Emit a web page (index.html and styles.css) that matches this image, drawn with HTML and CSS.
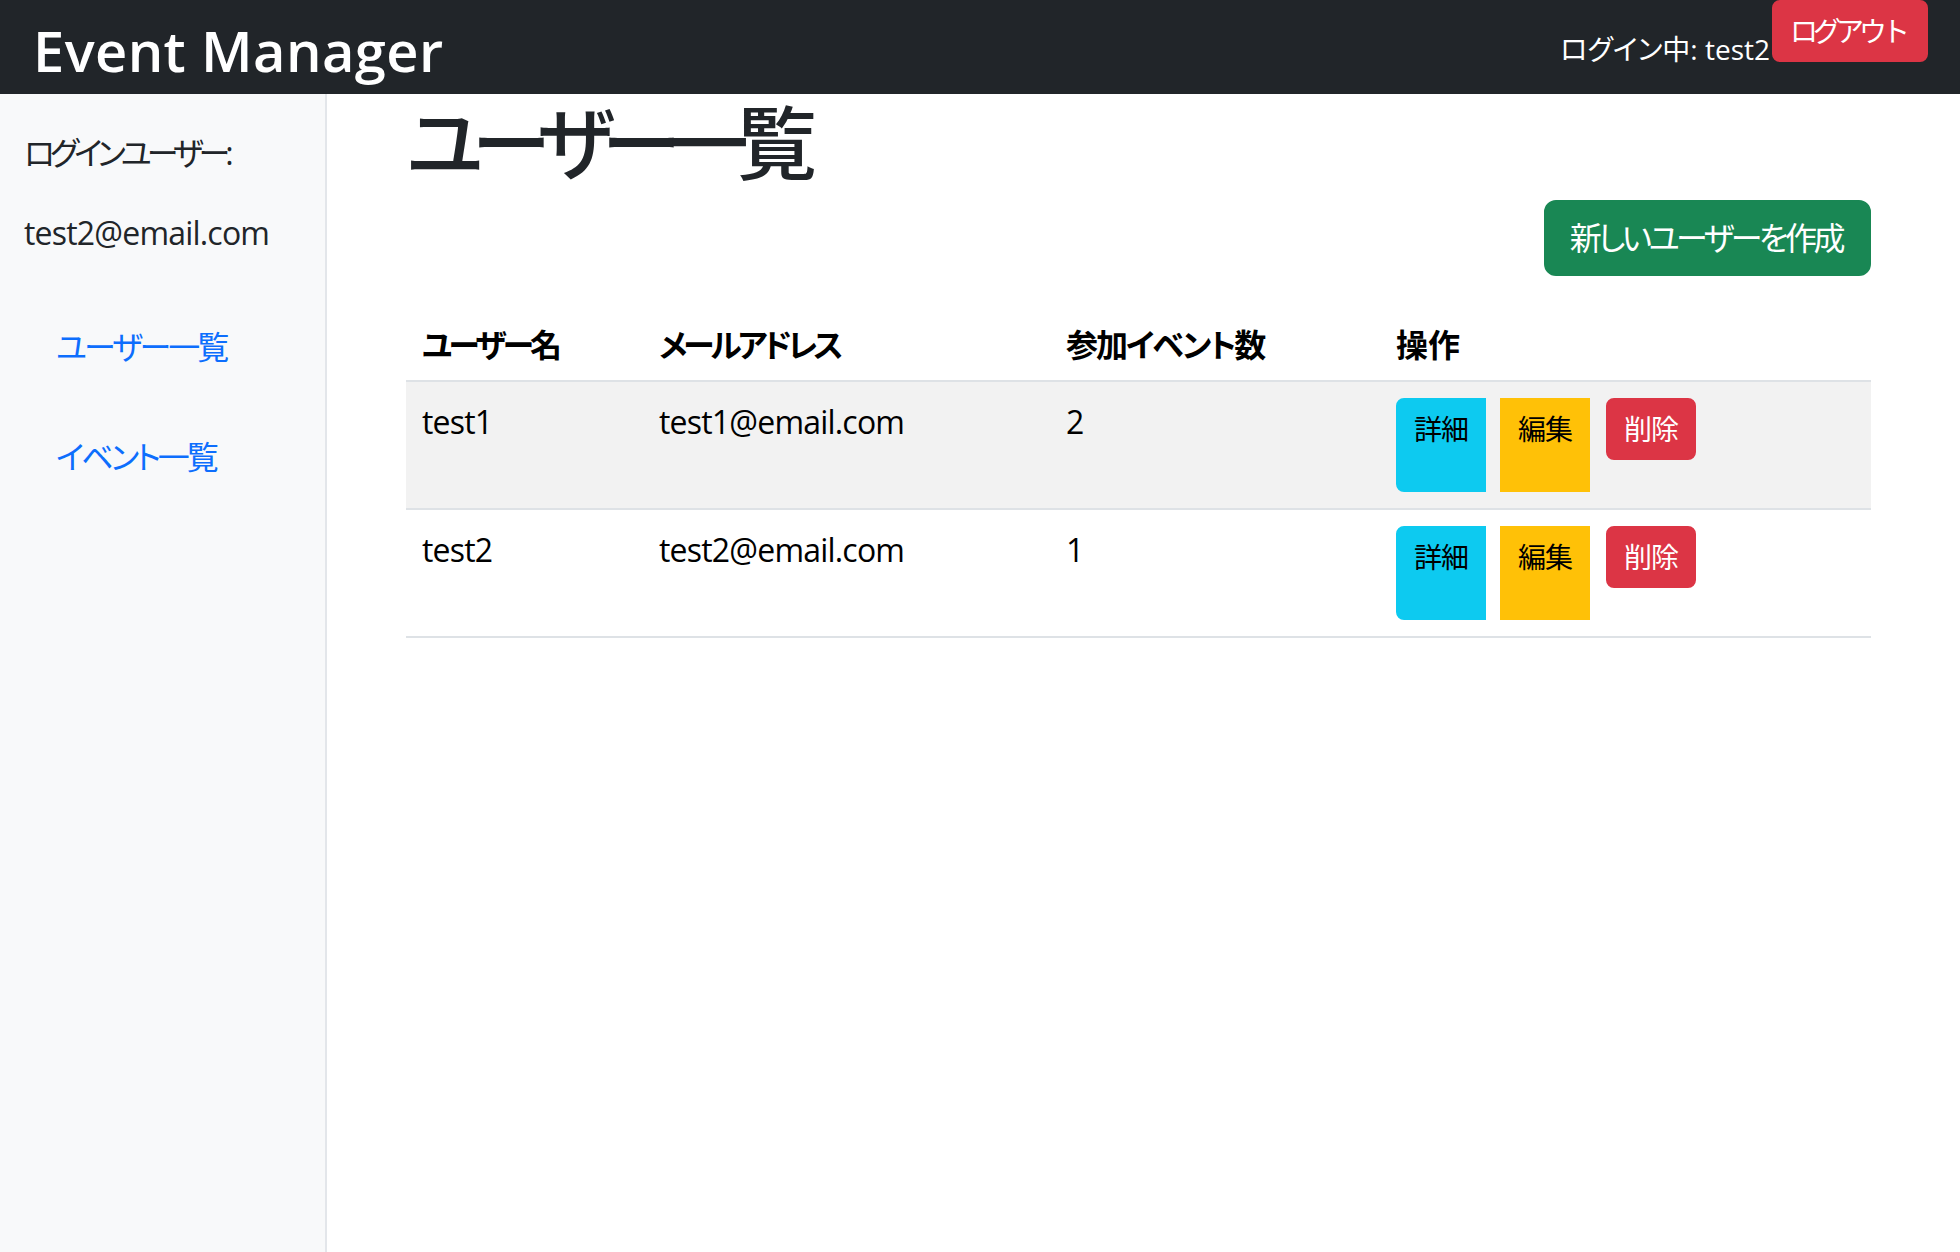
FILE: index.html
```html
<!DOCTYPE html>
<html lang="ja">
<head>
<meta charset="utf-8">
<title>Event Manager</title>
<link rel="stylesheet" href="styles.css">
</head>
<body>
<header class="navbar">
  <span class="brand">Event Manager</span>
  <div class="nav-right">
    <span class="login-info">ログイン中: test2</span>
    <button class="btn btn-sm btn-danger logout">ログアウト</button>
  </div>
</header>
<div class="layout">
  <aside class="sidebar">
    <p class="side-text side-label">ログインユーザー:</p>
    <p class="side-text side-email">test2@email.com</p>
    <ul class="side-nav">
      <li><a class="nav-link" href="#">ユーザー一覧</a></li>
      <li><a class="nav-link" href="#">イベント一覧</a></li>
    </ul>
  </aside>
  <main class="main">
    <h1 class="page-title">ユーザー一覧</h1>
    <div class="toolbar">
      <a class="btn btn-success new-user" href="#">新しいユーザーを作成</a>
    </div>
    <table class="table">
      <thead>
        <tr>
          <th class="col-name">ユーザー名</th>
          <th class="col-mail">メールアドレス</th>
          <th class="col-count">参加イベント数</th>
          <th class="col-ops">操作</th>
        </tr>
      </thead>
      <tbody>
        <tr class="striped">
          <td>test1</td>
          <td>test1@email.com</td>
          <td>2</td>
          <td>
            <div class="btn-group">
              <a class="btn btn-sm btn-info first" href="#">詳細</a>
              <a class="btn btn-sm btn-warning middle" href="#">編集</a>
              <form class="inline-form"><button class="btn btn-sm btn-danger" type="button">削除</button></form>
            </div>
          </td>
        </tr>
        <tr>
          <td>test2</td>
          <td>test2@email.com</td>
          <td>1</td>
          <td>
            <div class="btn-group">
              <a class="btn btn-sm btn-info first" href="#">詳細</a>
              <a class="btn btn-sm btn-warning middle" href="#">編集</a>
              <form class="inline-form"><button class="btn btn-sm btn-danger" type="button">削除</button></form>
            </div>
          </td>
        </tr>
      </tbody>
    </table>
  </main>
</div>
</body>
</html>
```

FILE: styles.css
```css
* { box-sizing: border-box; }

html, body { margin: 0; padding: 0; }

body {
  font-family: "Open Sans", "Noto Sans CJK JP", sans-serif;
  font-feature-settings: "palt";
  font-size: 32px;
  line-height: 1.5;
  color: #212529;
  background: #fff;
}

.navbar {
  height: 94px;
  background: #212529;
  display: flex;
  justify-content: space-between;
  align-items: flex-start;
  padding: 0 32px 0 33px;
}

.brand {
  color: #fff;
  font-size: 56px;
  font-weight: 600;
  line-height: 88px;
  padding-top: 6px;
  letter-spacing: 0.4px;
}

.nav-right {
  display: flex;
  align-items: flex-start;
  height: 94px;
}

.login-info {
  color: #fff;
  font-size: 28px;
  line-height: 42px;
  align-self: center;
  margin-top: 4px;
  margin-right: 2px;
}

.btn {
  display: inline-block;
  font-family: inherit;
  font-size: 32px;
  line-height: 48px;
  padding: 12px 24px;
  border: 2px solid transparent;
  border-radius: 12px;
  text-decoration: none;
  text-align: center;
  cursor: pointer;
  white-space: nowrap;
}

.btn-sm {
  font-size: 28px;
  line-height: 42px;
  padding: 8px 16px;
  border-radius: 8px;
  letter-spacing: -1px;
}

.btn-danger { background: #dc3545; border-color: #dc3545; color: #fff; }
.btn-success { background: #198754; border-color: #198754; color: #fff; }
.btn-info { background: #0dcaf0; border-color: #0dcaf0; color: #000; }
.btn-warning { background: #ffc107; border-color: #ffc107; color: #000; }

.logout {
  margin-top: 0;
  letter-spacing: -5px;
  padding-right: 21px;
}

.new-user { letter-spacing: -3.5px; padding-right: 27px; }

.layout {
  display: flex;
  min-height: 1158px;
}

.sidebar {
  width: 327px;
  flex: none;
  background: #f8f9fa;
  border-right: 2px solid #e3e6ea;
  padding: 35px 24px 0 24px;
  display: flex;
  flex-direction: column;
}

.side-text {
  margin: 0 0 32px 0;
  color: #212529;
}

.side-label { letter-spacing: -5px; }
.side-email { letter-spacing: -0.8px; }

.side-nav {
  list-style: none;
  margin: 18px 0 0 0;
  padding: 0;
}

.side-nav li { margin-bottom: 30px; }

.nav-link {
  display: block;
  padding: 16px 32px;
  color: #0d6efd;
  text-decoration: none;
  letter-spacing: -3px;
}

.main {
  flex: 1;
  padding: 0 89px 0 79px;
}

.page-title {
  font-size: 80px;
  font-weight: 500;
  line-height: 96px;
  margin: 0 0 10px 0;
  color: #212529;
  letter-spacing: -12px;
}

.toolbar {
  display: flex;
  justify-content: flex-end;
  margin-bottom: 24px;
}

.table {
  width: 100%;
  border-collapse: collapse;
  table-layout: fixed;
  color: #000;
}

.table th, .table td {
  padding: 16px;
  border-bottom: 2px solid #dee2e6;
  text-align: left;
  vertical-align: top;
}

.table th {
  font-weight: 700;
  padding-top: 21px;
  padding-bottom: 11px;
}

.table td { letter-spacing: -0.8px; }

.col-name { width: 237px; letter-spacing: -4px; }
.col-mail { width: 407px; letter-spacing: -4px; }
.col-count { width: 330px; letter-spacing: -2px; }

.striped td { background: #f2f2f2; }

.btn-group {
  display: flex;
  align-items: stretch;
}

.btn-group .first {
  margin-right: 16px;
  border-top-right-radius: 0;
  border-bottom-right-radius: 0;
}

.btn-group .middle {
  margin-left: -2px;
  margin-right: 16px;
  border-radius: 0;
}

.inline-form {
  margin: 0 0 32px 0;
}
```
